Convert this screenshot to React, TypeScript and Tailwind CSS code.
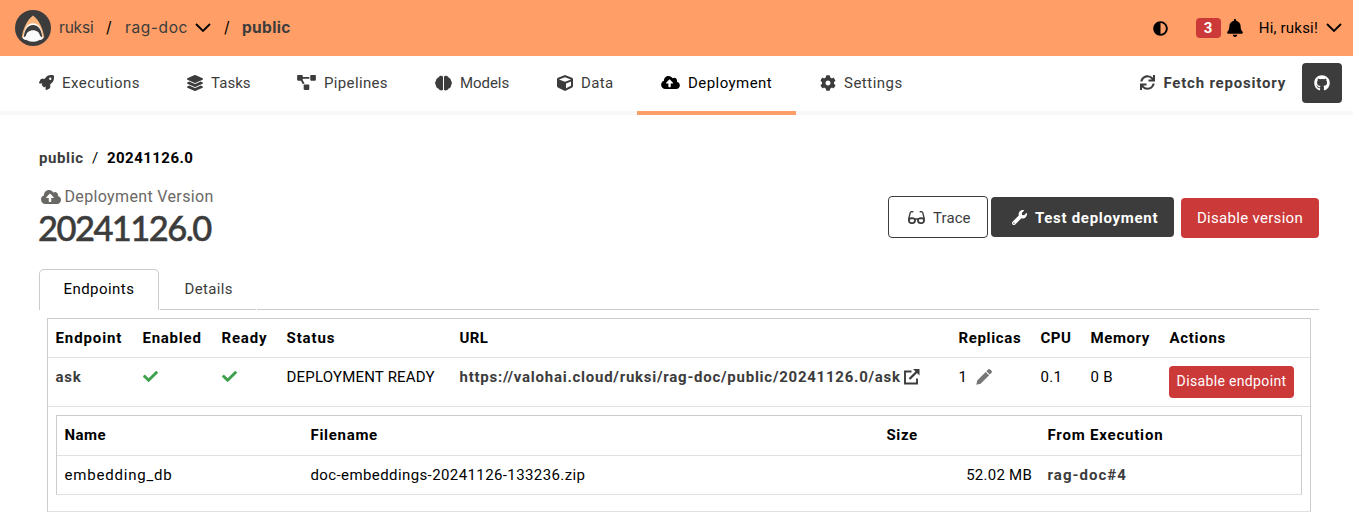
import React from "react";
import {
  FaRocket, FaLayerGroup, FaProjectDiagram, FaCube, FaCloudUploadAlt, FaCog, FaAdjust,
  FaBell, FaGithub, FaGlasses, FaWrench, FaCheck, FaSync,
} from "react-icons/fa";

function SharkLogo() {
  return (
    <svg viewBox="0 0 36 36" className="mr-2 size-9 shrink-0">
      <circle cx="18" cy="18" r="18" fill="#3c3c3c" />
      <path d="M18 5.5C12.500 9.500 8 18 6.800 27.500L9 29h18l2.200-1.500C28 18 23.500 9.500 18 5.500Z" fill="#f9b57c" />
      <path d="M18 13.200c-5.500 0-8.800 4.800-10 15.300l2 1.500h16l2-1.500c-1.200-10.500-4.500-15.300-10-15.300Z" fill="#fff" />
      <path d="M18 15c-5 0-8.200 4-9.200 11.500L12 31h12l3.200-4.500C26.200 19 23 15 18 15Z" fill="#3c3c3c" />
      <path d="M18 20.300c-4 0-6.300 2.200-7.200 5.700l-2.600 1.800C10.500 30.200 14 31.700 18 31.700s7.500-1.500 9.800-3.900L25.200 26c-.9-3.500-3.200-5.700-7.200-5.700Z" fill="#fafafa" />
    </svg>
  );
}

function Chevron() {
  return (
    <svg viewBox="0 0 16 10" className="h-2.5 w-4 shrink-0" fill="none" stroke="#000" strokeWidth="1.8">
      <path d="M1 1l7 7 7-7" />
    </svg>
  );
}

function BrainIcon() {
  return (
    <svg viewBox="0 0 17 16" className="h-4 w-[17px]" fill="currentColor">
      <path d="M8 1.500v13.300C6.800 16 4.300 15.400 3.700 13.700 1.900 13.500.9 12 1 10.300-.2 9-.2 6.900 1 5.700 1.100 4 2.200 2.700 3.500 2.400 4.100.6 6.900 0 8 1.500ZM9 1.500v13.300c1.200 1.200 3.700.6 4.300-1.100 1.800-.2 2.800-1.700 2.700-3.400 1.200-1.300 1.200-3.400 0-4.600-.1-1.700-1.200-3-2.500-3.300C12.900.6 10.100 0 9 1.500Z" />
    </svg>
  );
}

function ExternalLinkIcon() {
  return (
    <svg viewBox="0 0 16 16" className="ml-[3px] size-4" fill="none" stroke="currentColor" strokeWidth="1.9">
      <path d="M7.500 2.500H1v12h12V9.500" />
      <path d="M5.500 10l7.500-7.500" strokeWidth="2.300" />
      <path d="M9 0h6.500v6.500Z" fill="currentColor" stroke="none" />
    </svg>
  );
}

function PencilIcon() {
  return (
    <svg viewBox="0 0 16 16" className="ml-[9px] size-4" fill="#767676">
      <path d="M11.900.7a1.800 1.800 0 0 1 2.500 0l.9.9a1.800 1.800 0 0 1 0 2.500l-1.500 1.500-3.400-3.400ZM9.700 2.900l3.400 3.400-8.500 8.500L.3 15.700l.9-4.300Z" />
    </svg>
  );
}

type NavProps = { icon: React.ReactNode; label: string; box: string; active?: boolean };

function NavItem({ icon, label, box, active }: NavProps) {
  return (
    <a className={`flex h-[59px] items-center border-b-4 pb-0.5 whitespace-nowrap ${active ? "border-[#ff9e66] text-black" : "border-[#f8f8f8]"} ${box}`}>
      {icon}
      <span className="ml-2">{label}</span>
    </a>
  );
}

export default function App() {
  return (
    <div className="h-[525px] overflow-hidden bg-white font-['Roboto',sans-serif] text-[15px] leading-5 tracking-[0.35px] text-[#3c3c3c]">
      <header className="flex h-14 items-center bg-[#ff9e66] pl-[15px] pr-[11px] text-base">
        <SharkLogo />
        <div className="flex items-center font-['Inter',sans-serif] text-[15.5px]">
          <span className="w-[47px] tracking-[-0.2px]">ruksi</span>
          <span className="w-[19px] text-black">/</span>
          <span className="w-[70px] tracking-[0.6px]">rag-doc</span>
          <Chevron />
          <span className="ml-[13px] w-[18px] text-black">/</span>
          <span className="font-bold">public</span>
        </div>
        <div className="ml-auto flex items-center text-[15px] text-black">
          <FaAdjust className="mr-7 size-[15px]" />
          <span className="mr-1.5 flex h-5 w-[25px] items-center justify-center rounded bg-[#cc3939] font-bold text-white">3</span>
          <FaBell className="mr-4 h-[18px] w-4" />
          <span className="mr-2 tracking-[0.2px]">Hi, ruksi!</span>
          <Chevron />
        </div>
      </header>

      <nav className="flex h-[59px] border-b-4 border-[#f8f8f8]">
        <NavItem box="ml-[39px] w-[148px] tracking-[0.5px]" label="Executions" icon={<FaRocket className="size-[15px]" />} />
        <NavItem box="w-[110px] tracking-[0.05px]" label="Tasks" icon={<FaLayerGroup className="size-4" />} />
        <NavItem box="w-[138px]" label="Pipelines" icon={<FaProjectDiagram className="h-[15px] w-[19px]" />} />
        <NavItem box="w-[122px] tracking-[-0.05px]" label="Models" icon={<BrainIcon />} />
        <NavItem box="w-20" label="Data" icon={<FaCube className="size-4" />} />
        <NavItem box="w-[159px] pl-6 tracking-[0.45px]" label="Deployment" active icon={<FaCloudUploadAlt className="h-[15px] w-[19px]" />} />
        <NavItem box="pl-6 tracking-[0.5px]" label="Settings" icon={<FaCog className="size-4" />} />
        <div className="ml-auto flex h-[53px] items-center pr-[11px] font-bold">
          <FaSync className="mr-2 size-[15px]" />
          <span className="mr-4 tracking-[0.8px] whitespace-nowrap">Fetch repository</span>
          <button className="flex size-10 items-center justify-center rounded bg-[#3c3c3c] text-white">
            <FaGithub className="size-4" />
          </button>
        </div>
      </nav>

      <main className="pl-[39px] pr-[34px]">
        <div className="flex h-[71px] items-center pt-[14px] font-bold">
          <span className="w-[53px] tracking-[0.6px]">public</span>
          <span className="w-[15px] font-normal text-black">/</span>
          <span className="tracking-[0.45px] text-black">20241126.0</span>
        </div>

        <div className="flex h-[83px]">
          <div>
            <div className="flex h-[22px] items-center text-base text-[#6a6865]">
              <FaCloudUploadAlt className="mr-1 ml-[1.5px] h-4 w-5" />
              Deployment Version
            </div>
            <h1 className="-ml-px font-['Lato',sans-serif] text-[34.5px] leading-[39px] font-medium tracking-[-1.55px] [-webkit-text-stroke:0.5px_#3c3c3c]">20241126.0</h1>
          </div>
          <div className="ml-auto flex items-start pt-[10px]">
            <button className="mr-[3px] flex h-[42px] w-[100px] items-center rounded border border-[#3c3c3c] pl-[19px]">
              <FaGlasses className="mr-2 h-[15px] w-[17px]" />
              <span className="pt-px tracking-[0.1px]">Trace</span>
            </button>
            <button className="mt-px mr-[7px] flex h-10 w-[183px] items-center rounded bg-[#3c3c3c] pl-[21px] font-bold text-white">
              <FaWrench className="mr-2 size-[15px]" />
              <span className="pt-px tracking-[0.7px]">Test deployment</span>
            </button>
            <button className="mt-0.5 h-10 w-[138px] rounded bg-[#cc3939] tracking-[0.3px] text-white">Disable version</button>
          </div>
        </div>

        <div className="flex h-[41px]">
          <div className="flex w-[120px] items-center rounded-t-[5px] border border-b-0 border-[#ccc] pb-0.5 pl-[23.500px] tracking-[0.45px] text-black">Endpoints</div>
          <div className="mr-px ml-px flex w-24 items-center border-b border-[#ccc] pl-[24.5px]">Details</div>
          <div className="flex-1 border-b border-[#ccc]" />
        </div>

        <section className="mt-2 mr-2 ml-2 h-[194px] border border-[#ccc] border-b-[#e1e1e1] text-black">
          <div className="grid h-[39px] grid-cols-[87px_79px_65px_173px_499px_82px_50px_79px_1fr] items-center border-b border-[#e1e1e1] pl-[7.5px] font-bold">
            <span className="tracking-[0.9px]">Endpoint</span>
            <span className="tracking-[0.75px]">Enabled</span>
            <span className="tracking-[0.8px]">Ready</span>
            <span className="tracking-[0.9px]">Status</span>
            <span>URL</span>
            <span className="tracking-[0.65px]">Replicas</span>
            <span className="tracking-[0.5px]">CPU</span>
            <span className="tracking-[0.6px]">Memory</span>
            <span className="tracking-[0.7px]">Actions</span>
          </div>
          <div className="grid h-[49px] grid-cols-[87px_79px_65px_173px_499px_82px_50px_78.5px_1fr] items-start border-b border-[#e1e1e1] pt-[9px] pl-[7.5px]">
            <span className="font-bold tracking-[0.7px] text-[#3c3c3c]">ask</span>
            <FaCheck className="mt-0.5 size-[15px] text-[#3fa14d]" />
            <FaCheck className="mt-0.5 size-[15px] text-[#3fa14d]" />
            <span className="tracking-[0.2px] whitespace-nowrap">DEPLOYMENT READY</span>
            <span className="flex items-center font-bold tracking-[0.75px] whitespace-nowrap text-[#3c3c3c]">
              https://valohai.cloud/ruksi/rag-doc/public/20241126.0/ask
              <ExternalLinkIcon />
            </span>
            <span className="flex items-center">
              1<PencilIcon />
            </span>
            <span>0.1</span>
            <span>0 B</span>
            <button className="-mt-px h-8 w-[125px] rounded bg-[#cc3939] pb-0.5 text-sm text-white">Disable endpoint</button>
          </div>
          <div className="mx-2 mt-2 h-20 border border-[#ccc] border-b-[#e1e1e1]">
            <div className="grid h-10 grid-cols-[246px_576px_161px_1fr] items-center border-b border-[#e1e1e1] pb-0.5 pl-[7.500px] font-bold">
              <span className="tracking-[0.5px]">Name</span>
              <span className="tracking-[0.7px]">Filename</span>
              <span className="tracking-[0.6px]">Size</span>
              <span className="tracking-[0.8px]">From Execution</span>
            </div>
            <div className="grid h-[38px] grid-cols-[246px_576px_161px_1fr] items-center pl-[7.500px]">
              <span className="tracking-[0.8px]">embedding_db</span>
              <span className="tracking-[0.4px]">doc-embeddings-20241126-133236.zip</span>
              <span className="pr-[15.5px] text-right tracking-[0.25px]">52.02 MB</span>
              <span className="font-bold tracking-[1.05px] text-[#3c3c3c]">rag-doc#4</span>
            </div>
          </div>
        </section>
      </main>
    </div>
  );
}
